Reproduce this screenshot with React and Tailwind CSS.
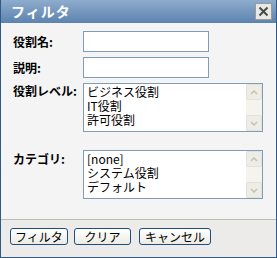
import React from 'react';

const font = { fontFamily: '"Noto Sans CJK JP", "Noto Sans", sans-serif' };

function ScrollList({ items }) {
  return (
    <div className="flex h-[49px] w-[180px] border border-[#7f9db9] bg-white">
      <div className="flex-1 overflow-hidden pl-[3px] pt-[1px] text-[12px] leading-[14px] text-black">
        {items.map((it) => (
          <div key={it} className="whitespace-nowrap">{it}</div>
        ))}
      </div>
      <div className="flex w-[16px] flex-col justify-between bg-[#f4f3ee]">
        <div className="flex h-[16px] items-center justify-center rounded-[2px] border border-[#e2e1dc] bg-[#eeede5]">
          <svg width="8" height="5" viewBox="0 0 8 5"><path d="M1 4 L4 1 L7 4" stroke="#c5c2b2" strokeWidth="1.5" fill="none" /></svg>
        </div>
        <div className="flex h-[16px] items-center justify-center rounded-[2px] border border-[#e2e1dc] bg-[#eeede5]">
          <svg width="8" height="5" viewBox="0 0 8 5"><path d="M1 1 L4 4 L7 1" stroke="#c5c2b2" strokeWidth="1.5" fill="none" /></svg>
        </div>
      </div>
    </div>
  );
}

function Btn({ children, w }) {
  return (
    <button className={`h-[17px] ${w} rounded-[3px] border border-[#1c4e80] bg-gradient-to-b from-white to-[#ecebe4] text-[12px] leading-[15px] text-black`}>
      {children}
    </button>
  );
}

export default function App() {
  return (
    <div className="flex h-[258px] w-[277px] flex-col border border-t-0 border-[#2e5a88] bg-[#f4f4f4]" style={font}>
      <div className="flex h-[23px] shrink-0 items-center justify-between bg-gradient-to-b from-[#8eaccd] to-[#5c83af] pl-[10px] pr-[4px]">
        <span className="text-[14px] font-bold tracking-[1px] text-white">フィルタ</span>
        <div className="flex h-[17px] w-[17px] items-center justify-center border border-[#9a9a9a] bg-[#e8e8e4]">
          <svg width="11" height="11" viewBox="0 0 11 11"><path d="M1.5 1.5 L9.5 9.5 M9.5 1.5 L1.5 9.5" stroke="#4a4a4a" strokeWidth="2" /></svg>
        </div>
      </div>

      <div className="flex flex-1 flex-col gap-[5px] pl-[12px] pt-[8px] text-[12px] text-black">
        <div className="flex items-center">
          <span className="w-[70px] font-bold">役割名:</span>
          <div className="h-[21px] w-[126px] border border-[#7f9db9] bg-white" />
        </div>
        <div className="flex items-center">
          <span className="w-[70px] font-bold">説明:</span>
          <div className="h-[21px] w-[126px] border border-[#7f9db9] bg-white" />
        </div>
        <div className="flex items-start">
          <span className="w-[70px] font-bold leading-[15px]">役割レベル:</span>
          <ScrollList items={['ビジネス役割', 'IT役割', '許可役割']} />
        </div>
        <div className="mt-[13px] flex items-start">
          <span className="w-[70px] pt-[1px] font-bold leading-[15px]">カテゴリ:</span>
          <ScrollList items={['[none]', 'システム役割', 'デフォルト']} />
        </div>
      </div>

      <div className="flex h-[38px] shrink-0 items-start gap-[6px] border-t border-[#bdbdb8] bg-[#ecebe9] pl-[9px] pt-[8px]">
        <Btn w="w-[58px]">フィルタ</Btn>
        <Btn w="w-[57px]">クリア</Btn>
        <Btn w="w-[72px] ml-[2px]">キャンセル</Btn>
      </div>
    </div>
  );
}
